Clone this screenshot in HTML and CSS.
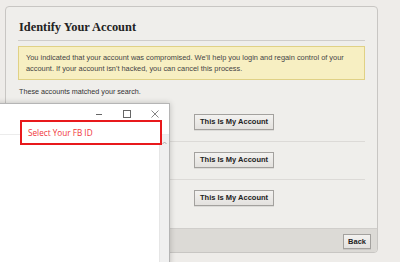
FILE: index.html
```html
<!DOCTYPE html>
<html>
<head>
  <title>Identify Your Account</title>
  <meta charset="UTF-8" />
  <link rel="stylesheet" href="styles.css">
</head>
<body>
  <div class="page">
    <div class="card">
      <div class="card-body">
        <h1>Identify Your Account</h1>
        <div class="notice">You indicated that your account was compromised. We'll help you login and regain control of your account. If your account isn't hacked, you can cancel this process.</div>
        <p class="matched">These accounts matched your search.</p>
        <ul class="accounts">
          <li><button class="btn">This Is My Account</button></li>
          <li><button class="btn">This Is My Account</button></li>
          <li><button class="btn">This Is My Account</button></li>
        </ul>
      </div>
      <div class="card-footer">
        <button class="btn">Back</button>
      </div>
    </div>

    <div class="window">
      <div class="titlebar">
        <svg class="ctl" width="8" height="8" viewBox="0 0 8 8"><path d="M1 4.5h6" stroke="#666" stroke-width="1"/></svg>
        <svg class="ctl" width="8" height="8" viewBox="0 0 8 8"><rect x="0.5" y="0.5" width="7" height="7" fill="none" stroke="#666" stroke-width="1"/></svg>
        <svg class="ctl" width="8" height="8" viewBox="0 0 8 8"><path d="M0.5 0.5l7 7M7.5 0.5l-7 7" stroke="#777" stroke-width="0.9"/></svg>
      </div>
      <div class="scrollbar">
        <svg width="9" height="8" viewBox="0 0 9 8"><path d="M2.5 5l2-2 2 2" fill="none" stroke="#999" stroke-width="0.8"/></svg>
      </div>
      <div class="pick">Select Your FB ID</div>
    </div>
  </div>
</body>
</html>
```

FILE: styles.css
```css
body {
  margin: 0;
  height: 262px;
  overflow: hidden;
  background: #eeece9;
  font-family: "Liberation Sans", Arial, sans-serif;
  color: #333;
}
.page {
  position: relative;
  padding: 6px 0 0 5px;
}
.card {
  width: 373px;
  box-sizing: border-box;
  border: 1px solid #c8c6c3;
  border-radius: 4px;
  background: #efeeeb;
  overflow: hidden;
}
.card-body {
  padding: 0 12px 11px;
}
h1 {
  margin: 12px 0 5px;
  padding: 0 0 5px 1px;
  font-family: "Liberation Serif", serif;
  font-size: 12.4px;
  line-height: 16px;
  color: #222;
  border-bottom: 1px solid #cfcdca;
}
.notice {
  padding: 5px 12px 5px 7px;
  font-size: 7.4px;
  line-height: 11px;
  background: #f7efc2;
  border: 1px solid #e0d185;
  color: #444;
}
.matched {
  margin: 6px 0 0 1px;
  font-size: 7.2px;
  line-height: 11px;
  color: #333;
}
.accounts {
  list-style: none;
  margin: 7px 0 0;
  padding: 0;
}
.accounts li {
  padding: 10px 0 11px 176px;
  border-bottom: 1px solid #dcdad7;
}
.accounts li:last-child {
  border-bottom: none;
}
.btn {
  display: block;
  margin: 0;
  padding: 2px 5px;
  font-family: "Liberation Sans", Arial, sans-serif;
  font-size: 7.5px;
  font-weight: bold;
  line-height: 10px;
  color: #222;
  background: linear-gradient(#f3f2f0, #e3e1de);
  border: 1px solid #a3a19e;
  box-shadow: 0 1px 0 rgba(0,0,0,0.08);
}
.card-footer {
  display: flex;
  justify-content: flex-end;
  padding: 5px 6px 3px;
  background: #dcdad6;
  border-top: 1px solid #d0cecb;
}
.card-footer .btn {
  padding: 2px 4px 1px;
}

/* popup window on top of the page */
.window {
  position: absolute;
  left: -10px;
  top: 103px;
  width: 180px;
  height: 170px;
  box-sizing: border-box;
  background: #fff;
  border: 1px solid #b5b5b5;
  box-shadow: 0 0 6px rgba(0,0,0,0.2);
}
.titlebar {
  display: flex;
  justify-content: flex-end;
  align-items: flex-start;
  gap: 20px;
  height: 24px;
  padding: 6px 10px 0 0;
  border-bottom: 1px solid #ececec;
}
.scrollbar {
  position: absolute;
  right: 0;
  top: 31px;
  bottom: 0;
  width: 9px;
  background: #f0f0f0;
  border-left: 1px solid #e6e6e6;
}
.scrollbar svg {
  display: block;
  margin-top: 4px;
}
.pick {
  position: absolute;
  left: 29px;
  top: 16px;
  width: 142px;
  height: 25px;
  box-sizing: border-box;
  padding-left: 6px;
  border: 2px solid #e8191c;
  font-family: "Open Sans", "Liberation Sans", sans-serif;
  font-size: 8.2px;
  line-height: 21px;
  color: #f0363a;
  background: #fff;
}
```
